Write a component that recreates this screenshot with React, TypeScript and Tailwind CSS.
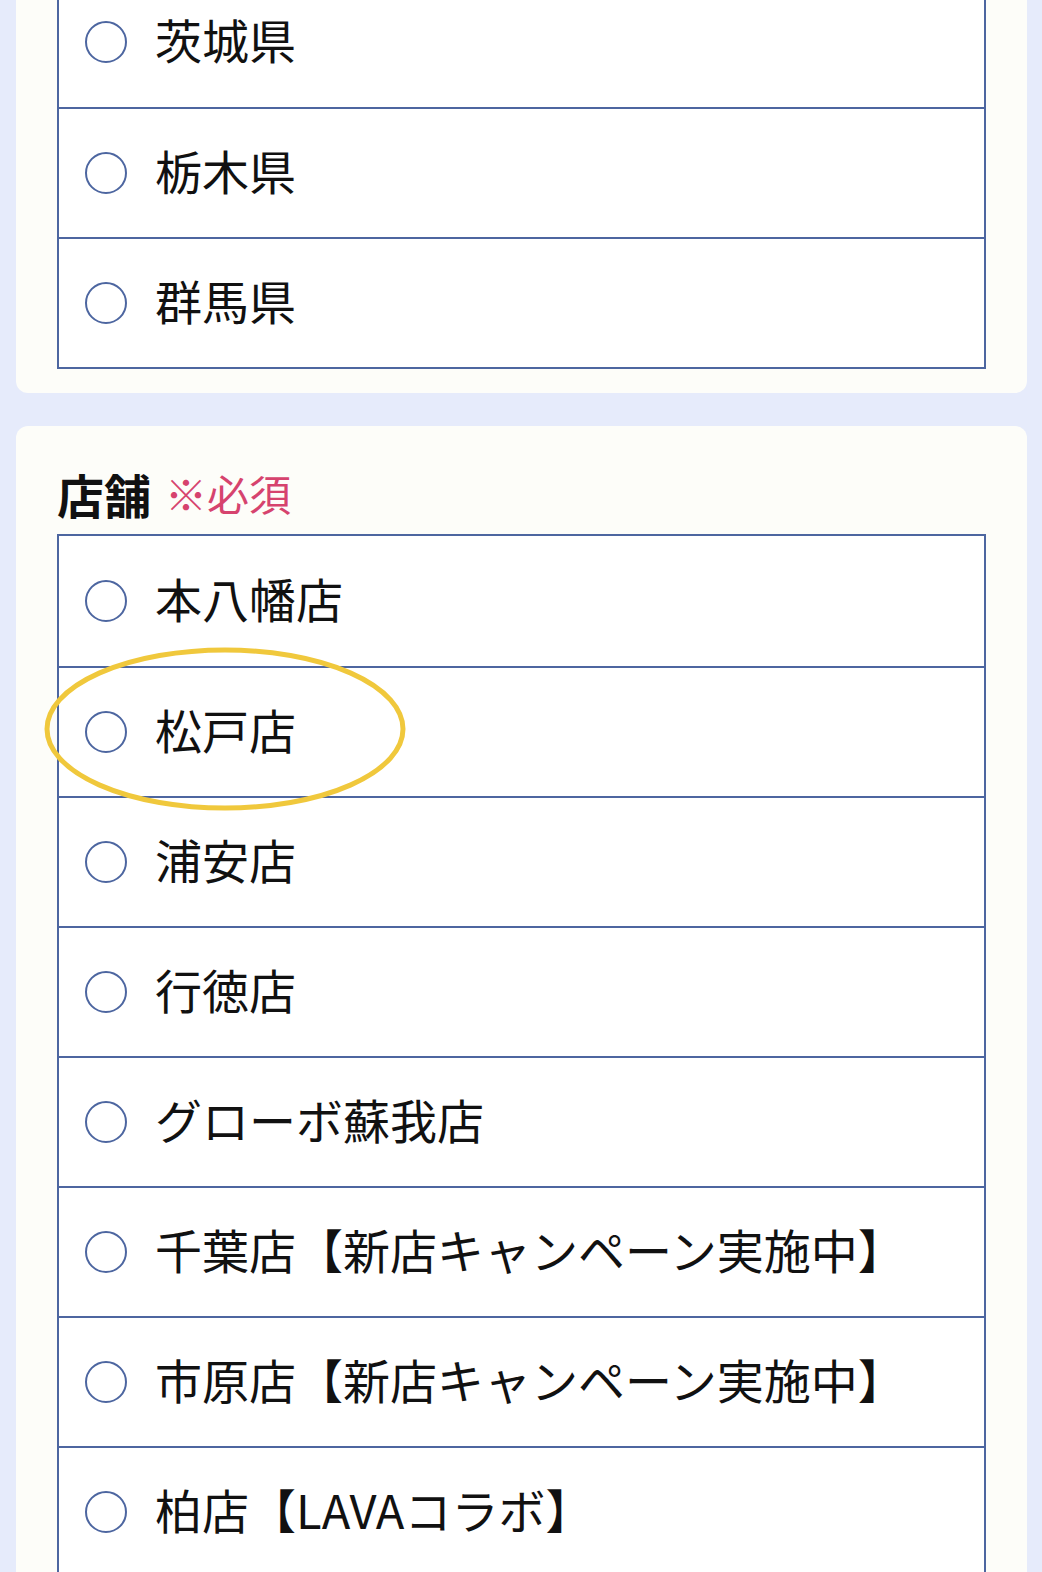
const prefectures = ["茨城県", "栃木県", "群馬県"];

const stores = [
  "本八幡店",
  "松戸店",
  "浦安店",
  "行徳店",
  "グローボ蘇我店",
  "千葉店【新店キャンペーン実施中】",
  "市原店【新店キャンペーン実施中】",
  "柏店【LAVAコラボ】",
];

function RadioRow({ label, first }: { label: string; first?: boolean }) {
  return (
    <label
      className={
        "flex items-center h-[130px] pl-[26px] gap-[28px] cursor-pointer " +
        (first ? "h-[128px]" : "border-t-2 border-[#4d66a0]")
      }
    >
      <span className="w-[42px] h-[42px] rounded-full border-2 border-[#4d66a0] shrink-0" />
      <span className="text-[47px] leading-none text-[#111] mb-[7px] whitespace-nowrap">
        {label}
      </span>
    </label>
  );
}

function OptionTable({ items }: { items: string[] }) {
  return (
    <div className="border-2 border-[#4d66a0] bg-white">
      {items.map((item, i) => (
        <RadioRow key={item} label={item} first={i === 0} />
      ))}
    </div>
  );
}

export default function App() {
  return (
    <div
      className="w-[1042px] h-[1572px] overflow-hidden bg-[#e6ebfb] pl-[16px] pr-[15px]"
      style={{ fontFamily: '"Noto Sans CJK JP", "Noto Sans", sans-serif' }}
    >
      <div className="-mt-[25px] bg-[#fdfdf9] rounded-b-[12px] px-[41px] pb-[24px]">
        <OptionTable items={prefectures} />
      </div>

      <div className="relative mt-[33px] bg-[#fdfdf9] rounded-[12px] px-[41px] pt-[36px] pb-[24px]">
        <div className="flex items-center h-[62px] mb-[10px]">
          <span className="text-[47px] font-bold leading-none text-[#111]">店舗</span>
          <span className="ml-[14px] text-[42px] leading-none text-[#d6436e]">※必須</span>
        </div>
        <OptionTable items={stores} />

        <svg
          className="absolute left-[27px] top-[220px] pointer-events-none"
          width="364"
          height="168"
          viewBox="0 0 364 168"
        >
          <ellipse
            cx="182"
            cy="83"
            rx="178"
            ry="79"
            fill="none"
            stroke="#f0c83c"
            strokeWidth="5"
          />
        </svg>
      </div>
    </div>
  );
}
